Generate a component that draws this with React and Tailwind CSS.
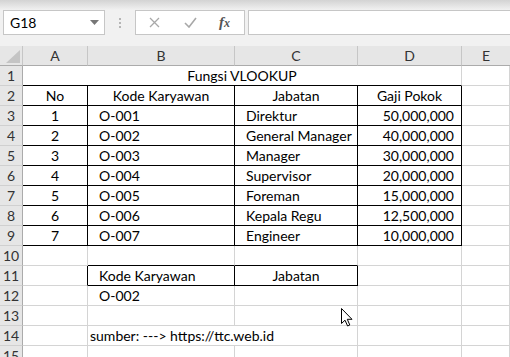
const cols = ["A", "B", "C", "D", "E"];
const colW = ["w-[65px]", "w-[147px]", "w-[123px]", "w-[104px]", "flex-1"];

const data = [
  ["1", "O-001", "Direktur", "50,000,000"],
  ["2", "O-002", "General Manager", "40,000,000"],
  ["3", "O-003", "Manager", "30,000,000"],
  ["4", "O-004", "Supervisor", "20,000,000"],
  ["5", "O-005", "Foreman", "15,000,000"],
  ["6", "O-006", "Kepala Regu", "12,500,000"],
  ["7", "O-007", "Engineer", "10,000,000"],
];

function Cell({ w, children, align = "l", br, bb, noR, className = "" }) {
  const a =
    align === "c" ? "justify-center" : align === "r" ? "justify-end pr-[7px]" : "justify-start pl-[11px]";
  return (
    <div
      className={[
        "flex h-[20px] shrink-0 items-end whitespace-nowrap border-b border-r pb-[1px] leading-[17px]",
        w,
        a,
        br ? "border-r-black" : noR ? "border-r-transparent" : "border-r-[#d4d4d4]",
        bb ? "border-b-black" : "border-b-[#d4d4d4]",
        className,
      ].join(" ")}
    >
      {children}
    </div>
  );
}

function RowHead({ n }) {
  return (
    <div className="flex h-[20px] w-[23px] shrink-0 items-center justify-center border-b border-r border-b-[#d0d0d0] border-r-[#ababab] bg-[#e6e6e6] text-[14px] text-[#333]">
      {n}
    </div>
  );
}

function Row({ n, children }) {
  return (
    <div className="flex">
      <RowHead n={n} />
      {children}
    </div>
  );
}

function Cursor() {
  return (
    <svg className="absolute left-[341px] top-[308px]" width="13" height="19" viewBox="0 0 13 19">
      <path
        d="M0.5 0.5 L0.5 15.5 L4 12.2 L6.6 18 L8.8 17 L6.3 11.3 L11 11.3 Z"
        fill="white"
        stroke="black"
        strokeWidth="1"
        strokeLinejoin="miter"
      />
    </svg>
  );
}

export default function App() {
  return (
    <div
      className="relative h-[357px] w-[510px] overflow-hidden bg-white text-[14px] text-black"
      style={{ fontFamily: "Lato, 'Open Sans', sans-serif" }}
    >
      {/* formula bar */}
      <div className="h-[46px] bg-[#f1f1f1]">
        <div className="h-[10px] bg-gradient-to-b from-[#d3d3d3] to-[#f1f1f1]" />
        <div className="flex items-start pl-[3px]">
          <div className="flex h-[25px] w-[102px] items-center justify-between border border-[#c6c6c6] bg-white pl-[6px] pr-[5px] text-[14px]">
            <span>G18</span>
            <svg width="9" height="5" viewBox="0 0 9 5">
              <path d="M0 0 L9 0 L4.5 5 Z" fill="#777" />
            </svg>
          </div>
          <div className="flex h-[25px] w-[30px] flex-col items-center justify-center gap-[2px]">
            <span className="h-[2px] w-[2px] bg-[#b5b5b5]" />
            <span className="h-[2px] w-[2px] bg-[#b5b5b5]" />
            <span className="h-[2px] w-[2px] bg-[#b5b5b5]" />
          </div>
          <div className="flex h-[25px] w-[110px] items-center border border-[#c6c6c6] bg-white">
            <svg className="ml-[13px]" width="11" height="11" viewBox="0 0 11 11">
              <path d="M1 1 L10 10 M10 1 L1 10" stroke="#a8a8a8" strokeWidth="1.3" />
            </svg>
            <svg className="ml-[24px]" width="13" height="11" viewBox="0 0 13 11">
              <path d="M1 6 L5 10 L12 1" stroke="#a8a8a8" strokeWidth="1.6" fill="none" />
            </svg>
            <span
              className="ml-[22px] text-[15px] font-bold italic text-[#555]"
              style={{ fontFamily: "'Liberation Serif', serif" }}
            >
              f<span className="text-[12px]">x</span>
            </span>
          </div>
          <div className="ml-[3px] h-[25px] flex-1 border border-r-0 border-[#c6c6c6] bg-white" />
        </div>
      </div>

      {/* column headers */}
      <div className="flex h-[20px] bg-[#e6e6e6] text-[14px] text-[#333]">
        <div className="relative w-[23px] shrink-0 border-b border-r border-b-[#ababab] border-r-[#c6c6c6]">
          <svg className="absolute left-[6px] top-[4px]" width="14" height="13" viewBox="0 0 14 13">
            <path d="M14 0 L14 13 L0 13 Z" fill="#c4c4c4" />
          </svg>
        </div>
        {cols.map((c, i) => (
          <div
            key={c}
            className={[
              "flex shrink-0 items-center justify-center border-b border-b-[#ababab]",
              colW[i],
              i < 4 ? "border-r border-r-[#c6c6c6]" : "",
            ].join(" ")}
          >
            {c}
          </div>
        ))}
      </div>

      {/* sheet */}
      <Row n="1">
        <Cell w="w-[439px]" align="c" bb>
          Fungsi VLOOKUP
        </Cell>
        <Cell w="flex-1" />
      </Row>
      <Row n="2">
        <Cell w={colW[0]} align="c" br bb>No</Cell>
        <Cell w={colW[1]} align="c" br bb>Kode Karyawan</Cell>
        <Cell w={colW[2]} align="c" br bb>Jabatan</Cell>
        <Cell w={colW[3]} align="c" br bb>Gaji Pokok</Cell>
        <Cell w="flex-1" />
      </Row>
      {data.map((r, i) => (
        <Row key={r[0]} n={String(i + 3)}>
          <Cell w={colW[0]} align="c" br bb>{r[0]}</Cell>
          <Cell w={colW[1]} br bb>{r[1]}</Cell>
          <Cell w={colW[2]} br bb>{r[2]}</Cell>
          <Cell w={colW[3]} align="r" br bb>{r[3]}</Cell>
          <Cell w="flex-1" />
        </Row>
      ))}
      <Row n="10">
        <Cell w={colW[0]} />
        <Cell w={colW[1]} bb />
        <Cell w={colW[2]} bb />
        <Cell w={colW[3]} />
        <Cell w="flex-1" />
      </Row>
      <Row n="11">
        <Cell w={colW[0]} br />
        <Cell w={colW[1]} br bb>Kode Karyawan</Cell>
        <Cell w={colW[2]} align="c" br bb>Jabatan</Cell>
        <Cell w={colW[3]} />
        <Cell w="flex-1" />
      </Row>
      <Row n="12">
        <Cell w={colW[0]} />
        <Cell w={colW[1]}>O-002</Cell>
        <Cell w={colW[2]} />
        <Cell w={colW[3]} />
        <Cell w="flex-1" />
      </Row>
      <Row n="13">
        <Cell w={colW[0]} />
        <Cell w={colW[1]} />
        <Cell w={colW[2]} />
        <Cell w={colW[3]} />
        <Cell w="flex-1" />
      </Row>
      <Row n="14">
        <Cell w={colW[0]} />
        <Cell w="w-[270px]" className="!pl-[2px]">sumber: ---&gt; https://ttc.web.id</Cell>
        <Cell w={colW[3]} />
        <Cell w="flex-1" />
      </Row>
      <Row n="15">
        <Cell w={colW[0]} />
        <Cell w={colW[1]} />
        <Cell w={colW[2]} />
        <Cell w={colW[3]} />
        <Cell w="flex-1" />
      </Row>

      <Cursor />
    </div>
  );
}
